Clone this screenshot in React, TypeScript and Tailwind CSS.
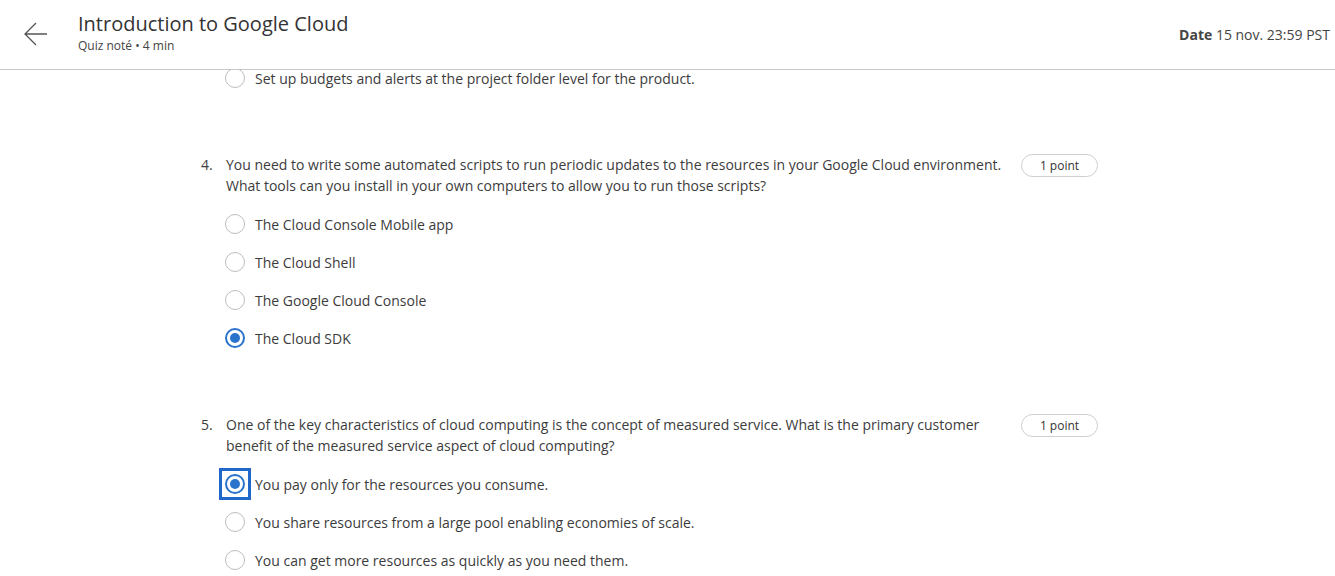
import React from 'react';

interface Question {
  num: number;
  lines: string[];
  options: string[];
  selected: number;
  focused?: boolean;
}

const questions: Question[] = [
  {
    num: 4,
    lines: [
      'You need to write some automated scripts to run periodic updates to the resources in your Google Cloud environment.',
      'What tools can you install in your own computers to allow you to run those scripts?',
    ],
    options: ['The Cloud Console Mobile app', 'The Cloud Shell', 'The Google Cloud Console', 'The Cloud SDK'],
    selected: 3,
  },
  {
    num: 5,
    lines: [
      'One of the key characteristics of cloud computing is the concept of measured service. What is the primary customer',
      'benefit of the measured service aspect of cloud computing?',
    ],
    options: [
      'You pay only for the resources you consume.',
      'You share resources from a large pool enabling economies of scale.',
      'You can get more resources as quickly as you need them.',
    ],
    selected: 0,
    focused: true,
  },
];

const Radio = ({ checked, focused }: { checked?: boolean; focused?: boolean }) => (
  <span
    className={`flex h-[20px] w-[20px] shrink-0 items-center justify-center ${
      focused ? 'outline-[3px] outline-solid outline-[#1f68c9] outline-offset-[3px]' : ''
    }`}
  >
    {checked ? (
      <span className="flex h-[20px] w-[20px] items-center justify-center rounded-full border-2 border-[#2a73cc] bg-white">
        <span className="h-[10px] w-[10px] rounded-full bg-[#2a73cc]" />
      </span>
    ) : (
      <span className="h-[20px] w-[20px] rounded-full border-[1.5px] border-[#bdbdbd] bg-white" />
    )}
  </span>
);

const OptionRow = ({ label, checked, focused }: { label: string; checked?: boolean; focused?: boolean }) => (
  <div className="flex h-[38px] items-center pl-[24px]">
    <Radio checked={checked} focused={focused} />
    <span className="ml-[10px] text-[14px] text-[#3c3c3c]">{label}</span>
  </div>
);

export default function App() {
  return (
    <div className="min-h-screen w-[1335px] overflow-hidden bg-white" style={{ fontFamily: '"Open Sans", Arial, sans-serif' }}>
      <header className="sticky top-0 z-10 flex h-[70px] items-start border-b border-[#c8c8c8] bg-white">
        <div className="flex w-[78px] pt-[21px] pl-[22px]">
          <svg width="26" height="26" viewBox="0 0 26 26" fill="none" stroke="#555" strokeWidth="1.3">
            <path d="M25 13H3M14 2L3 13l11 11" />
          </svg>
        </div>
        <div className="flex flex-col pt-[10px]">
          <h1 className="text-[20px] leading-[27px] text-[#333]">Introduction to Google Cloud</h1>
          <span className="mt-[1px] text-[12px] leading-[16px] text-[#444]">Quiz noté • 4 min</span>
        </div>
        <div className="ml-auto pt-[24px] pr-[5px] text-[14px] text-[#444]">
          <span className="font-bold">Date</span> 15 nov. 23:59 PST
        </div>
      </header>

      <main className="-mt-[11px] ml-[201px] w-[897px]">
        <OptionRow label="Set up budgets and alerts at the project folder level for the product." />

        {questions.map(q => (
          <section key={q.num} className="mt-[57px]">
            <div className="flex items-start">
              <span className="w-[25px] text-[14px] leading-[21px] text-[#3c3c3c]">{q.num}.</span>
              <div className="flex-1 text-[14px] leading-[21px] text-[#3c3c3c]">
                {q.lines.map(l => (
                  <div key={l} className="whitespace-nowrap">{l}</div>
                ))}
              </div>
              <span className="ml-[10px] flex h-[23px] w-[77px] items-center justify-center rounded-full border border-[#cfcfcf] text-[12px] text-[#333]">
                1 point
              </span>
            </div>
            <div className="mt-[9px]">
              {q.options.map((o, i) => (
                <OptionRow key={o} label={o} checked={i === q.selected} focused={q.focused && i === q.selected} />
              ))}
            </div>
          </section>
        ))}
      </main>
    </div>
  );
}
